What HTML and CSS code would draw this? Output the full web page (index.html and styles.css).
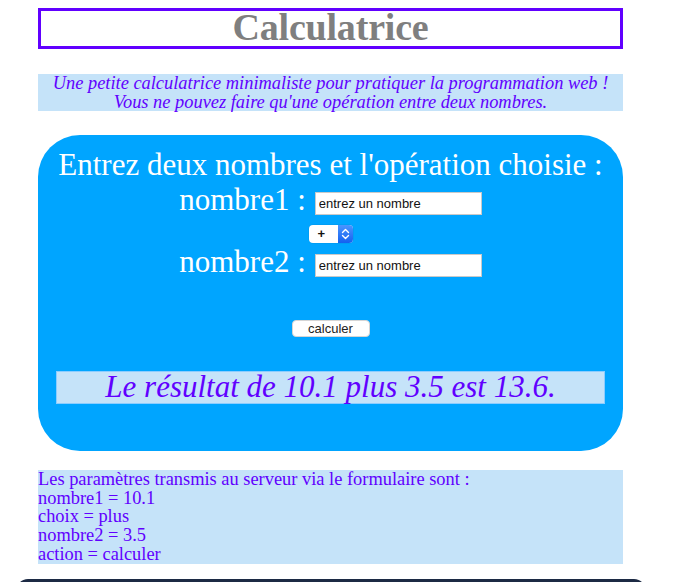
FILE: index.html
```html
<!DOCTYPE html>
<html lang="fr">
<head>
<meta charset="utf-8">
<title>Calculatrice</title>
<link rel="stylesheet" href="styles.css">
</head>
<body>
<div class="page">
  <h1 class="title">Calculatrice</h1>
  <p class="intro">Une petite calculatrice minimaliste pour pratiquer la programmation web !<br>Vous ne pouvez faire qu'une opération entre deux nombres.</p>
  <form class="calc">
    <div class="calc-head">Entrez deux nombres et l'opération choisie :</div>
    <div class="row row-first">
      <label class="lbl">nombre1 :</label>
      <input class="num" type="text" value="entrez un nombre">
    </div>
    <div class="row row-select">
      <span class="sel">
        <span class="sel-value">+</span>
        <span class="sel-arrows">
          <svg width="15" height="18" viewBox="0 0 15 18"><path d="M4.5 7.5 L7.5 4.5 L10.5 7.5 M4.5 10.5 L7.5 13.5 L10.5 10.5" fill="none" stroke="#fff" stroke-width="1.4" stroke-linecap="round" stroke-linejoin="round"/></svg>
        </span>
      </span>
    </div>
    <div class="row">
      <label class="lbl">nombre2 :</label>
      <input class="num" type="text" value="entrez un nombre">
    </div>
    <div class="row row-btn">
      <button class="btn" type="button">calculer</button>
    </div>
    <div class="result">Le résultat de 10.1 plus 3.5 est 13.6.</div>
  </form>
  <div class="params">Les paramètres transmis au serveur via le formulaire sont :<br>nombre1 = 10.1<br>choix = plus<br>nombre2 = 3.5<br>action = calculer</div>
  <div class="footer"></div>
</div>
</body>
</html>
```
FILE: styles.css
```css
html, body {
  margin: 0;
  padding: 0;
  background: #fff;
  overflow: hidden;
}
body {
  padding-top: 8px;
  font-family: "Liberation Serif", "Times New Roman", serif;
}
.page {
  margin-left: 38px;
  width: 585px;
}
.title {
  margin: 0;
  border: 3px solid #6100ff;
  height: 35px;
  line-height: 33px;
  text-align: center;
  color: #7f7f7f;
  font-size: 38px;
  font-weight: bold;
  letter-spacing: -0.2px;
}
.intro {
  margin: 25px 0 0;
  background: #c5e3f9;
  color: #6100ff;
  font-style: italic;
  font-size: 18.4px;
  line-height: 18.5px;
  padding-bottom: 0;
  text-align: center;
}
.calc {
  margin: 24px 0 0;
  height: 316px;
  box-sizing: border-box;
  background: #00a5ff;
  border-radius: 42px;
  padding-top: 14px;
  display: flex;
  flex-direction: column;
  align-items: center;
  color: #fff;
}
.calc-head {
  font-size: 31px;
  line-height: 32px;
}
.row {
  display: flex;
  align-items: center;
  justify-content: center;
  gap: 9px;
}
.row-first {
  margin-top: 3px;
}
.lbl {
  font-size: 31px;
  line-height: 31px;
}
.num {
  width: 167px;
  height: 23px;
  box-sizing: border-box;
  border: 1px solid #c9c9c9;
  padding: 0 3px;
  font-family: "Liberation Sans", Arial, sans-serif;
  font-size: 13px;
  color: #111;
  background: #fff;
  margin-top: 7px;
}
.row-select {
  margin: 7px 0 0;
  height: 24px;
}
.sel {
  display: flex;
  width: 44px;
  height: 18px;
  border-radius: 4px;
  background: #fff;
  overflow: hidden;
  box-shadow: 0 0 0 0.5px rgba(0,0,0,0.08);
}
.sel-value {
  flex: 1;
  font-family: "Liberation Sans", Arial, sans-serif;
  font-size: 13px;
  font-weight: bold;
  color: #111;
  line-height: 18px;
  padding-left: 9px;
}
.sel-arrows {
  width: 15px;
  height: 18px;
  background: linear-gradient(#4a95ff, #1461f0);
  display: flex;
}
.row-btn {
  margin-top: 43px;
}
.btn {
  width: 78px;
  height: 17px;
  padding: 0;
  border: 0.5px solid #d5d5d5;
  border-radius: 4px;
  background: #fff;
  font-family: "Liberation Sans", Arial, sans-serif;
  font-size: 13px;
  color: #222;
  line-height: 15px;
}
.result {
  margin-top: 34px;
  align-self: stretch;
  margin-left: 18px;
  margin-right: 18px;
  height: 33px;
  box-sizing: border-box;
  border: 1px solid #8ccdff;
  background: #c5e3f9;
  color: #6100ff;
  font-style: italic;
  font-size: 31px;
  line-height: 30px;
  text-align: center;
}
.params {
  margin-top: 19px;
  background: #c5e3f9;
  color: #6100ff;
  font-size: 18.4px;
  line-height: 18.7px;
}
.footer {
  margin-top: 15px;
  margin-left: -22px;
  width: 630px;
  height: 30px;
  background: #1c2a44;
  border-radius: 12px 12px 0 0;
}
```
